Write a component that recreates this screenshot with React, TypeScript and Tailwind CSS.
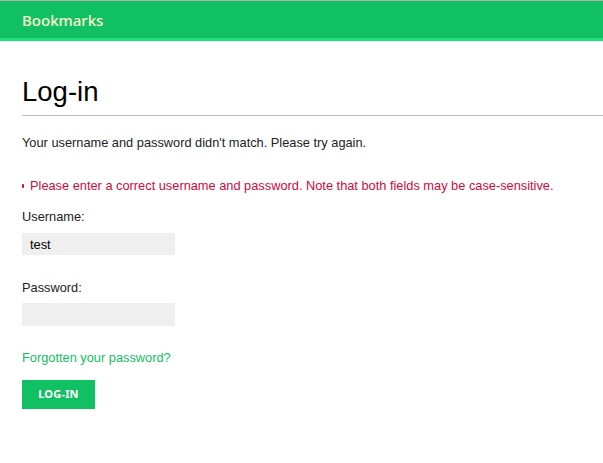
export default function App() {
  return (
    <div className="min-h-[463px] bg-white font-['Liberation_Sans',Arial,sans-serif] text-[12.8px] text-[#222]">
      <div className="h-px bg-[#b8b0a8]" />
      <header className="h-[37px] bg-[#12c064] border-b-[3px] border-[#1ee27c] flex items-center px-[22px] box-content">
        <span className="font-['Noto_Sans',sans-serif] text-[15px] font-medium text-[#fdf7cf] pt-px">Bookmarks</span>
      </header>
      <main className="pl-[22px] pt-[34px]">
        <h1 className="text-[27.5px] leading-[34px] font-normal text-black">Log-in</h1>
        <hr className="mt-[6px] border-0 h-px bg-[#bdbdbd]" />
        <p className="mt-[19px] leading-[16px]">Your username and password didn't match. Please try again.</p>
        <ul className="mt-[27px] leading-[16px] text-[#d10a3c]">
          <li className="flex items-center">
            <span className="w-[2px] h-[4px] bg-[#d10a3c] rounded-full mr-[6px]" />
            Please enter a correct username and password. Note that both fields may be case-sensitive.
          </li>
        </ul>
        <form className="mt-[15px]">
          <label className="block leading-[16px]">Username:</label>
          <input
            defaultValue="test"
            className="mt-[8px] block w-[153px] h-[22px] bg-[#efefef] px-[8px] text-[12.8px] outline-none text-black"
          />
          <label className="block mt-[25px] leading-[16px]">Password:</label>
          <input
            type="password"
            className="mt-[7px] block w-[153px] h-[23px] bg-[#efefef] px-[8px] outline-none"
          />
          <a className="block mt-[24px] leading-[16px] text-[#12c064]" href="#">Forgotten your password?</a>
          <button
            type="button"
            className="mt-[14px] w-[73px] h-[29px] bg-[#12c064] text-white text-[11px] font-bold font-['Noto_Sans',sans-serif] tracking-[0.2px]"
          >
            LOG-IN
          </button>
        </form>
      </main>
    </div>
  );
}
